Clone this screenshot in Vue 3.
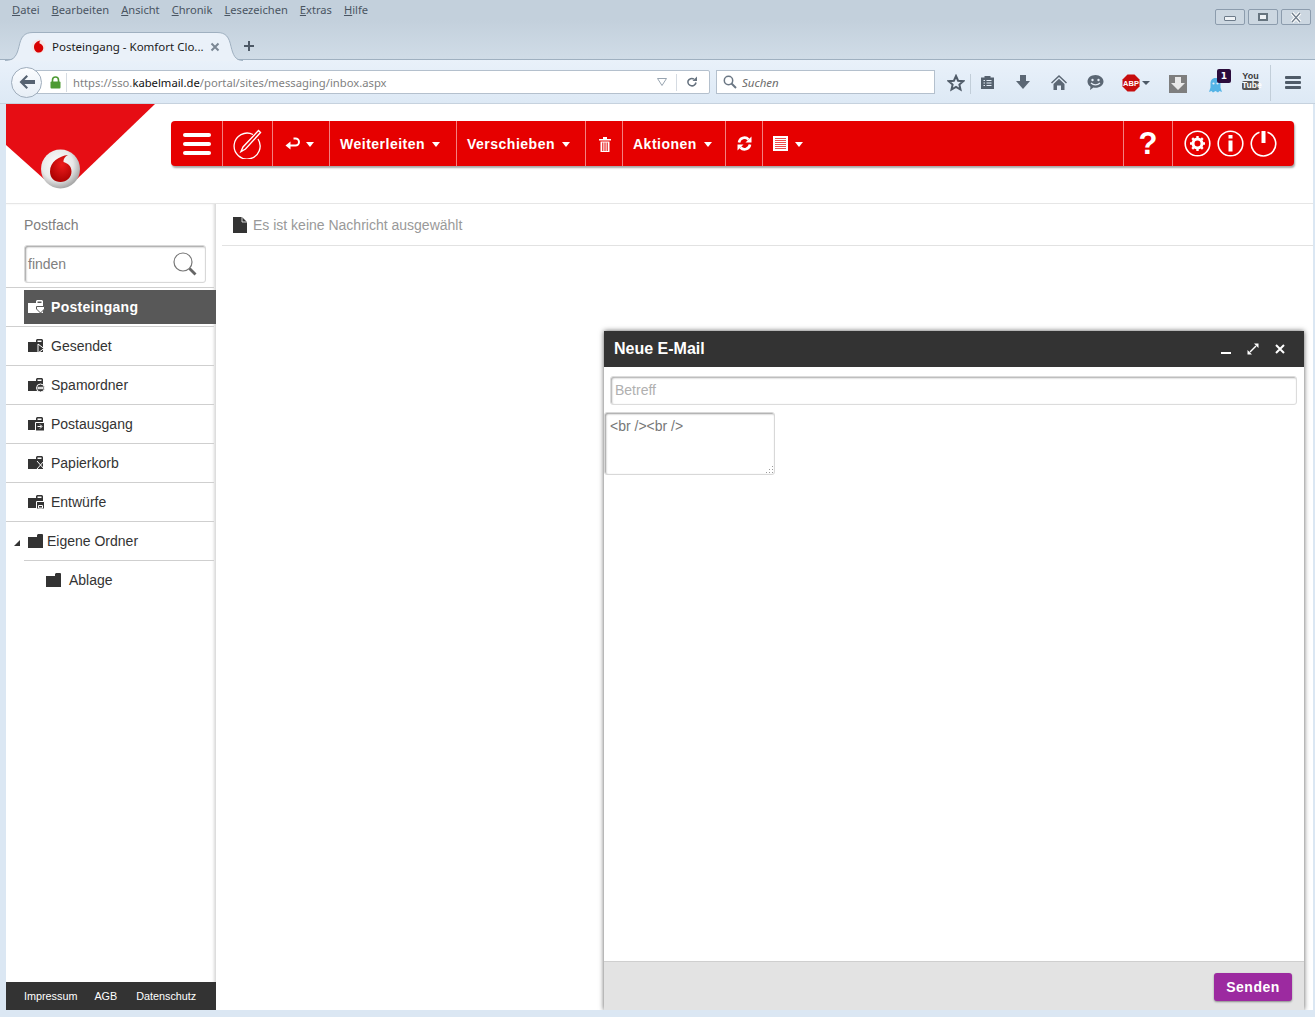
<template>
  <div class="browser">
    <div class="menubar">
      <span v-for="m in menus" :key="m.rest" class="menu-item"><u>{{ m.key }}</u>{{ m.rest }}</span>
      <div class="win-buttons">
        <div class="win-btn"><span class="win-min"></span></div>
        <div class="win-btn"><span class="win-max"></span></div>
        <div class="win-btn">
          <svg width="14" height="11" viewBox="0 0 14 11"><path d="M3 1l8 9M11 1l-8 9" fill="none" stroke="#fff" stroke-width="3.400"/><path d="M3 1l8 9M11 1l-8 9" fill="none" stroke="#6f7d8b" stroke-width="1.300"/></svg>
        </div>
      </div>
    </div>

    <div class="tabstrip">
      <div class="tab">
        <svg class="tab-shape" width="238" height="29" viewBox="0 0 238 29">
          <path d="M0 29c10 0 12-6 14-14.500C16 5 19 .5 28 .5h184c9 0 12 4.500 14 14 2 8 4 14.500 12 14.500z" fill="#eaf1f9"/>
          <path d="M0 28.500c10 0 12-6 14-14C16 5 19 .5 28 .5h184c9 0 12 4.500 14 14 2 8 4 14 12 14" fill="none" stroke="#9fb0c0"/>
        </svg>
        <svg class="tab-favicon" width="15" height="15" viewBox="0 0 15 15"><circle cx="7.500" cy="7.500" r="7" fill="#f3e6e6"/><path d="M9.500 1.500C6 2 3 4.500 3 8s2.300 5.500 4.800 5.500 4.500-2 4.500-4.500-2-4-3.700-4.500c-.3-1.200 0-2.500.9-3z" fill="#d80000"/></svg>
        <span class="tab-title">Posteingang - Komfort Clo...</span>
        <svg class="tab-close" width="10" height="10" viewBox="0 0 10 10"><path d="M1.500 1.500l7 7M8.500 1.500l-7 7" stroke="#7b8794" stroke-width="2"/></svg>
      </div>
      <svg class="new-tab" width="12" height="12" viewBox="0 0 12 12"><path d="M6 1v10M1 6h10" stroke="#4d5966" stroke-width="2"/></svg>
    </div>

    <div class="navbar">
      <div class="back-btn">
        <svg width="18" height="16" viewBox="0 0 18 16"><path d="M8.500 1L1.500 8l7 7 1.500-1.500L6.500 10H17V6H6.500L10 2.500z" fill="#566271"/></svg>
      </div>
      <div class="urlbar">
        <svg class="lock" width="11" height="13" viewBox="0 0 11 13"><path d="M2.500 6V4a3 3 0 016 0v2" fill="none" stroke="#4d9a33" stroke-width="1.600"/><rect x="0.500" y="5.500" width="10" height="7" rx="1" fill="#4d9a33"/></svg>
        <span class="url-text">https://sso.<b>kabelmail.de</b>/portal/sites/messaging/inbox.aspx</span>
        <svg class="url-drop" width="10" height="8" viewBox="0 0 10 8"><path d="M.5.500h9L5 7.500z" fill="none" stroke="#98a4b0"/></svg>
        <span class="url-sep"></span>
        <svg class="url-reload" width="12" height="12" viewBox="0 0 12 12"><path d="M10 6.500A4 4 0 112 5a4 4 0 016-1.800" fill="none" stroke="#66727f" stroke-width="1.600"/><path d="M11 .500V5H6.500z" fill="#66727f"/></svg>
      </div>
      <div class="searchbar">
        <svg width="14" height="14" viewBox="0 0 14 14"><circle cx="5.500" cy="5.500" r="4.200" fill="none" stroke="#6b7784" stroke-width="1.500"/><path d="M8.500 8.500l4.500 4.500" stroke="#6b7784" stroke-width="2"/></svg>
        <span>Suchen</span>
      </div>
      <div class="nav-icons">
        <svg class="ni ni-star" width="18" height="18" viewBox="0 0 18 18"><path d="M9 2l2.100 4.700 5.100.5-3.800 3.400 1.100 5L9 13l-4.500 2.600 1.100-5L1.800 7.200l5.100-.5z" fill="none" stroke="#4f5b68" stroke-width="2"/></svg>
        <span class="nav-sep"></span>
        <svg class="ni ni-list" width="15" height="16" viewBox="0 0 15 16"><path d="M1 3.500h3.500V2h6v1.500H14V15H1z" fill="#55616e"/><path d="M3.500 6.500h1.500M6.500 6.500h5M3.500 9h1.500M6.500 9h5M3.500 11.500h1.500M6.500 11.500h5" stroke="#e4edf7" stroke-width="1.200"/></svg>
        <svg class="ni ni-down" width="14" height="16" viewBox="0 0 14 16"><path d="M4 1h6v6h4l-7 8-7-8h4z" fill="#5b6774"/></svg>
        <svg class="ni ni-home" width="16" height="15" viewBox="0 0 16 15"><path d="M8 0L0 7.500l1 1L8 2l7 6.500 1-1z" fill="#5b6774"/><path d="M2.500 9L8 3.800 13.500 9v6H10v-4.500H6V15H2.500z" fill="#5b6774"/></svg>
        <svg class="ni ni-chat" width="17" height="17" viewBox="0 0 17 17"><path d="M8.500 1C4 1 .5 3.800.5 7.500c0 2.200 1.200 4 3 5.200L3 16l3.500-2.400c.6.100 1.300.2 2 .2 4.500 0 8-2.800 8-6.300S13 1 8.500 1z" fill="#5b6774"/><circle cx="5.500" cy="6" r="1.200" fill="#e4edf7"/><circle cx="11.500" cy="6" r="1.200" fill="#e4edf7"/><path d="M4 9c2.500 2.500 6.500 2.500 9 0" fill="none" stroke="#e4edf7" stroke-width="1.200"/></svg>
        <svg class="ni ni-abp" width="18" height="18" viewBox="0 0 18 18"><path d="M5.500 .5h7l5 5v7l-5 5h-7l-5-5v-7z" fill="#c70d0d"/><text x="9" y="12" text-anchor="middle" class="abp-text">ABP</text></svg>
        <span class="abp-caret"></span>
        <svg class="ni ni-dl" width="18" height="18" viewBox="0 0 18 18"><rect width="18" height="18" fill="#7e7e7e"/><path d="M6 2h6v6h4l-7 7-7-7h4z" fill="#e9e9e9"/></svg>
        <div class="ni ni-ghost">
          <svg width="13" height="15" viewBox="0 0 13 15"><path d="M6.500 0C3 0 1.500 2.500 1.500 5.500v4L0 14l2.500-1L4 14.500 6.500 13 9 14.500l1.500-1.500 2.500 1-1.500-4.500v-4C11.500 2.500 10 0 6.500 0z" fill="#55b4e6"/><circle cx="4.500" cy="5.500" r="1.100" fill="#e4edf7"/><circle cx="8.500" cy="5.500" r="1.100" fill="#e4edf7"/></svg>
          <span class="ghost-badge">1</span>
        </div>
        <div class="ni ni-yt"><span class="yt-you">You</span><span class="yt-tube">Tube</span></div>
        <span class="nav-sep nav-sep2"></span>
        <div class="ni ni-burger"><span></span><span></span><span></span></div>
      </div>
    </div>

    <div class="page">
      <svg class="logo" width="150" height="95" viewBox="0 0 150 95">
        <defs>
          <radialGradient id="ring" cx="42%" cy="38%" r="62%">
            <stop offset="0" stop-color="#ffffff"/><stop offset="0.65" stop-color="#e8e8e8"/><stop offset="1" stop-color="#a8a8a8"/>
          </radialGradient>
          <radialGradient id="drop" cx="55%" cy="35%" r="70%">
            <stop offset="0" stop-color="#ee1c1c"/><stop offset="1" stop-color="#a80000"/>
          </radialGradient>
        </defs>
        <path d="M0 0h149L71 75H38L0 41z" fill="#e60d14"/>
        <circle cx="54.500" cy="65" r="19.500" fill="url(#ring)"/>
        <path d="M62 51c-9 1-18 7-18 16.500 0 6.500 4.500 10.500 10.500 10.500s11-4.500 11-10.500c0-5.500-4-8.500-8-9.500-.4-2.800 1.500-5.500 4.500-7z" fill="url(#drop)"/>
      </svg>

      <header class="topbar">
        <div class="toolbar">
          <div class="tool t-burger"><div class="burger"><span></span><span></span><span></span></div></div>
          <div class="tool t-compose">
            <svg width="30" height="30" viewBox="0 0 30 30"><path d="M21 5.500A13 13 0 1026 10" fill="none" stroke="#fff" stroke-width="1.300"/><path d="M26.500 1.500l2 2L13.500 20l-4.500 2.500L11 18z" fill="none" stroke="#fff" stroke-width="1.400"/></svg>
          </div>
          <div class="tool t-reply">
            <svg width="15" height="14" viewBox="0 0 15 14"><path d="M8.500 1.500h2a3.500 3.500 0 010 7H4" fill="none" stroke="#fff" stroke-width="2"/><path d="M5.500 4.500L.5 8.500l5 4z" fill="#fff"/></svg>
            <i class="caret"></i>
          </div>
          <div class="tool t-fwd">Weiterleiten<i class="caret"></i></div>
          <div class="tool t-move">Verschieben<i class="caret"></i></div>
          <div class="tool t-trash">
            <svg width="12" height="16" viewBox="0 0 12 16"><path d="M0 3h12v1.500H0zM4 1h4v2H4z" fill="#fff"/><path d="M1.500 5.500h9V16h-9z" fill="#fff"/><path d="M3.800 6.500V15M6 6.500V15M8.200 6.500V15" stroke="#e60000" stroke-width="1"/></svg>
          </div>
          <div class="tool t-actions">Aktionen<i class="caret"></i></div>
          <div class="tool t-sync">
            <svg width="15" height="15" viewBox="0 0 15 15"><path d="M2 6.500A5.500 5.500 0 0111.500 3.500" fill="none" stroke="#fff" stroke-width="2.600"/><path d="M14.500 .5v6h-6z" fill="#fff"/><path d="M13 8.500A5.500 5.500 0 013.500 11.500" fill="none" stroke="#fff" stroke-width="2.600"/><path d="M.5 14.500v-6h6z" fill="#fff"/></svg>
          </div>
          <div class="tool t-view">
            <svg width="15" height="15" viewBox="0 0 15 15"><rect width="15" height="15" fill="#fff"/><path d="M2 2.500h11M2 4.500h11M2 6.500h11M2 8.500h11M2 10.500h11M2 12.500h11" stroke="#e60000" stroke-width="0.700"/></svg>
            <i class="caret"></i>
          </div>
          <div class="tool-gap"></div>
          <div class="tool t-help">?</div>
          <div class="t-round">
            <svg width="27" height="27" viewBox="0 0 27 27"><circle cx="13.500" cy="13.500" r="12.300" fill="none" stroke="#fff" stroke-width="1.600"/><circle cx="13.500" cy="13.500" r="4.500" fill="none" stroke="#fff" stroke-width="3"/><path d="M13.500 6v3M13.500 18v3M6 13.500h3M18 13.500h3M8.200 8.200l2 2M16.800 16.800l2 2M18.800 8.200l-2 2M10.200 16.800l-2 2" stroke="#fff" stroke-width="2.400"/></svg>
            <svg width="27" height="27" viewBox="0 0 27 27"><circle cx="13.500" cy="13.500" r="12.300" fill="none" stroke="#fff" stroke-width="1.600"/><rect x="11.500" y="5" width="4" height="3.500" fill="#fff"/><rect x="11.500" y="10.500" width="4" height="11" fill="#fff"/></svg>
            <svg width="27" height="27" viewBox="0 0 27 27"><path d="M9.500 2.200a12.200 12.200 0 108 0" fill="none" stroke="#fff" stroke-width="1.600"/><rect x="11.500" y="1" width="4" height="12" fill="#fff"/></svg>
          </div>
        </div>
      </header>

      <div class="content">
        <aside class="sidebar">
          <div class="side-title">Postfach</div>
          <div class="side-search">
            <span>finden</span>
            <svg width="26" height="26" viewBox="0 0 26 26"><circle cx="11" cy="11" r="9" fill="none" stroke="#777" stroke-width="1.200"/><path d="M17.500 17.500l6 6" stroke="#666" stroke-width="2.800"/></svg>
          </div>
          <ul class="folders">
            <li v-for="f in folders" :key="f.name" class="folder" :class="{ active: f.active }">
              <div class="folder-link">
                <svg width="18" height="16" viewBox="0 0 18 16">
                  <path :d="folderShape" fill="currentColor"/>
                  <path d="M9.500 2.500h4V4h-4z" class="folder-notch"/>
                  <path :d="f.mark" class="folder-mark"/>
                </svg>
                <span>{{ f.name }}</span>
              </div>
            </li>
            <li class="folder own">
              <i class="tree-arrow"></i>
              <svg width="15" height="14" viewBox="0 0 15 14"><path d="M0 3h9V1l1-1h4l1 .5V14H0z" fill="#333"/></svg>
              <span>Eigene Ordner</span>
            </li>
            <li class="folder sub">
              <svg width="15" height="14" viewBox="0 0 15 14"><path d="M0 3h9V1l1-1h4l1 .5V14H0z" fill="#333"/></svg>
              <span>Ablage</span>
            </li>
          </ul>
          <footer class="side-footer">
            <span>Impressum</span><span>AGB</span><span>Datenschutz</span>
          </footer>
        </aside>

        <main class="reader">
          <div class="reader-head">
            <svg width="14" height="16" viewBox="0 0 14 16"><path d="M0 0h9l5 5v11H0z" fill="#333"/><path d="M9 0v5h5" fill="none" stroke="#fff" stroke-width="0.800"/></svg>
            <span>Es ist keine Nachricht ausgewählt</span>
          </div>
        </main>
      </div>

      <section class="compose">
        <div class="compose-head">
          <span class="compose-title">Neue E-Mail</span>
          <div class="compose-icons">
            <svg width="12" height="12" viewBox="0 0 12 12"><rect x="1" y="9" width="10" height="2" fill="#fff"/></svg>
            <svg width="12" height="12" viewBox="0 0 12 12"><path d="M7 .5h4.500V5zM.5 7v4.500H5z" fill="#fff"/><path d="M3 9l6-6" stroke="#fff" stroke-width="1.400"/></svg>
            <svg width="12" height="12" viewBox="0 0 12 12"><path d="M2 2l8 8M10 2l-8 8" stroke="#fff" stroke-width="2"/></svg>
          </div>
        </div>
        <div class="compose-body">
          <input class="subject" placeholder="Betreff" />
          <div class="message-wrap">
            <textarea class="message" :value="bodyText"></textarea>
            <svg class="grip" width="8" height="8" viewBox="0 0 8 8"><path d="M6 0h1v1H6zM3 3h1v1H3zM6 3h1v1H6zM0 6h1v1H0zM3 6h1v1H3zM6 6h1v1H6z" fill="#999"/></svg>
          </div>
        </div>
        <div class="compose-foot">
          <button class="send">Senden</button>
        </div>
      </section>
    </div>
  </div>
</template>

<script setup>
const menus = [
  { key: 'D', rest: 'atei' },
  { key: 'B', rest: 'earbeiten' },
  { key: 'A', rest: 'nsicht' },
  { key: 'C', rest: 'hronik' },
  { key: 'L', rest: 'esezeichen' },
  { key: 'E', rest: 'xtras' },
  { key: 'H', rest: 'ilfe' }
]

const folderShape = 'M0 4h8V2l1-1h5l1 1v12H0z'

const folders = [
  { name: 'Posteingang', active: true, mark: 'M8.500 7.500h8v2.500l-4 4-4-4z' },
  { name: 'Gesendet', mark: 'M10 6l6 4.500-6 4.500z' },
  { name: 'Spamordner', mark: 'M8.500 11a4 4 0 108 0 4 4 0 00-8 0zM10 10.300h5v1.400h-5z' },
  { name: 'Postausgang', mark: 'M7.500 6.500h9V15h-9zM9.500 10.500h4M12 8.500l2 2-2 2' },
  { name: 'Papierkorb', mark: 'M9 6l7 8M16 6l-7 8' },
  { name: 'Entwürfe', mark: 'M8.500 7.500h8V15h-8zM10.500 11.500h4V14h-4z' }
]

const bodyText = '<br /><br />'
</script>

<style>
html, body {
  margin: 0;
  background: #dce8f4;
}
</style>

<style scoped>
.browser {
  width: 1315px;
  height: 1017px;
  overflow: hidden;
  background: #dbe7f3;
  font-family: "Liberation Sans", Arial, sans-serif;
}

/* window chrome */
.menubar {
  height: 20px;
  position: relative;
  z-index: 1;
  display: flex;
  align-items: center;
  padding: 0 0 2px 12px;
  box-sizing: border-box;
  gap: 12px;
  background: #c3d0dc;
  font-family: "Noto Sans", sans-serif;
  font-size: 11.150px;
  color: #4a5562;
}
.menu-item u {
  text-decoration: underline;
}
.win-buttons {
  position: absolute;
  top: 9px;
  right: 4px;
  display: flex;
  gap: 3px;
}
.win-btn {
  width: 30px;
  height: 16px;
  box-sizing: border-box;
  border: 1px solid #8c9cad;
  border-radius: 2px;
  background: #ccd7e1;
  display: flex;
  align-items: center;
  justify-content: center;
}
.win-min {
  width: 10px;
  height: 3px;
  margin-top: 3px;
  border: 1px solid #6d7b8a;
  border-radius: 1px;
  background: #eef2f6;
}
.win-max {
  width: 6px;
  height: 4px;
  border: 2px solid #66747f;
  background: #eef2f6;
}
.tabstrip {
  height: 40px;
  position: relative;
  background: linear-gradient(#c3d0dc, #d0dce7);
  border-bottom: 1px solid #9fb0c0;
  box-sizing: border-box;
  display: flex;
  align-items: flex-end;
}
.tab {
  position: relative;
  width: 238px;
  height: 28px;
  margin-bottom: -1px;
  margin-left: 5px;
  padding-top: 1px;
  box-sizing: border-box;
  display: flex;
  align-items: center;
  font-family: "Noto Sans", sans-serif;
  font-size: 11.500px;
  color: #1b1b1b;
}
.tab-shape {
  position: absolute;
  left: 0;
  top: 0;
}
.tab-favicon {
  position: relative;
  margin-left: 26px;
  flex: none;
}
.tab-title {
  position: relative;
  margin-left: 6px;
  width: 158px;
  white-space: nowrap;
}
.tab-close {
  position: relative;
  flex: none;
}
.new-tab {
  margin: 0 0 7px 0;
}
.navbar {
  height: 44px;
  display: flex;
  align-items: center;
  background: linear-gradient(#e9f1fa, #dde9f5);
  border-bottom: 1px solid #c6d2de;
  box-sizing: border-box;
  padding: 1px 0 0 11px;
}
.back-btn {
  width: 31px;
  height: 31px;
  box-sizing: border-box;
  margin-right: -15px;
  position: relative;
  z-index: 1;
  border: 1px solid #9fadbc;
  border-radius: 50%;
  background: linear-gradient(#fbfdff, #e7eef6);
  display: flex;
  align-items: center;
  justify-content: center;
}
.urlbar {
  width: 683px;
  height: 24px;
  box-sizing: border-box;
  display: flex;
  align-items: center;
  border: 1px solid #b4c0cd;
  border-radius: 0 2px 2px 0;
  background: #fff;
  padding-left: 22px;
  font-family: "Noto Sans", sans-serif;
  font-size: 11.250px;
  color: #7f7f7f;
}
.lock {
  flex: none;
}
.url-text {
  flex: 1;
  margin-left: 5px;
  padding: 1px 0 0 6px;
  border-left: 1px solid #d5dbe2;
  line-height: 18px;
}
.url-text b {
  font-weight: 400;
  color: #111;
}
.url-drop {
  margin-right: 9px;
}
.url-sep {
  width: 1px;
  height: 17px;
  background: #d5dbe2;
}
.url-reload {
  margin: 0 11px 0 9px;
}
.searchbar {
  width: 219px;
  height: 24px;
  box-sizing: border-box;
  margin-left: 6px;
  padding-left: 6px;
  display: flex;
  align-items: center;
  gap: 5px;
  border: 1px solid #b4c0cd;
  background: #fff;
  font-family: "Noto Sans", sans-serif;
  font-size: 11.500px;
  font-style: italic;
  color: #6d6d6d;
}
.nav-icons {
  position: relative;
  flex: 1;
  height: 40px;
}
.ni {
  position: absolute;
}
.ni-star { left: 12px; top: 12px; }
.ni-list { left: 45px; top: 12px; }
.ni-down { left: 81px; top: 12px; }
.ni-home { left: 116px; top: 13px; }
.ni-chat { left: 152px; top: 12px; }
.ni-abp { left: 187px; top: 12px; }
.ni-dl { left: 234px; top: 13px; }
.ni-ghost { left: 274px; top: 7px; width: 24px; height: 24px; }
.ni-ghost svg {
  position: absolute;
  left: 0;
  top: 9px;
}
.ni-yt { left: 307px; top: 10px; width: 17px; }
.ni-burger { left: 350px; top: 14px; width: 16px; }
.nav-sep {
  position: absolute;
  left: 35px;
  top: 12px;
  width: 1px;
  height: 20px;
  background: #c2ced9;
}
.nav-sep2 {
  left: 335px;
  top: 3px;
  height: 36px;
}
.abp-text {
  font-family: "Liberation Sans", sans-serif;
  font-size: 7.500px;
  font-weight: 700;
  fill: #fff;
}
.abp-caret {
  position: absolute;
  left: 207px;
  top: 19px;
  border-left: 4px solid transparent;
  border-right: 4px solid transparent;
  border-top: 4px solid #4d5966;
}
.ghost-badge {
  position: absolute;
  left: 8px;
  top: 0;
  width: 14px;
  height: 14px;
  border-radius: 2px;
  background: #2c0c3c;
  color: #fff;
  font-family: "DejaVu Sans", sans-serif;
  font-size: 9px;
  font-weight: 700;
  line-height: 14px;
  text-align: center;
}
.yt-you, .yt-tube {
  display: block;
  font-family: "Liberation Sans", sans-serif;
  font-size: 9px;
  font-weight: 700;
  line-height: 8px;
  text-align: center;
  color: #3b3b3b;
}
.yt-tube {
  margin-top: 1px;
  background: #555;
  color: #fff;
  border-radius: 2px;
  height: 9px;
  line-height: 9px;
  font-size: 8.500px;
}
.ni-burger span {
  display: block;
  height: 3px;
  margin-bottom: 2px;
  background: #4f5b68;
  border-radius: 1px;
}

/* page */
.page {
  position: relative;
  width: 1307px;
  height: 906px;
  margin-left: 6px;
  overflow: hidden;
  background: #fff;
  color: #333;
}
.logo {
  position: absolute;
  left: 0;
  top: 0;
}
.topbar {
  height: 100px;
  box-sizing: border-box;
  border-bottom: 1px solid #e6e6e6;
  padding: 17px 19px 0 165px;
}
.toolbar {
  height: 45px;
  display: flex;
  align-items: stretch;
  background: #e60000;
  border-radius: 4px;
  box-shadow: 1px 2px 2px rgba(0, 0, 0, 0.35);
  color: #fff;
  font-size: 14px;
  font-weight: 700;
  letter-spacing: 0.5px;
}
.tool {
  box-sizing: border-box;
  flex: none;
  display: flex;
  align-items: center;
  justify-content: flex-start;
  border-right: 1px solid rgba(255, 255, 255, 0.5);
  padding-left: 10px;
}
.tool-gap {
  flex: 1;
}
.t-burger { width: 52px; padding-left: 12px; }
.t-compose { width: 50px; padding-left: 9px; }
.t-reply { width: 57px; padding-left: 12px; }
.t-reply .caret { margin-left: 6px; }
.t-fwd { width: 127px; }
.t-move { width: 129px; }
.t-trash { width: 37px; padding-left: 13px; }
.t-actions { width: 103px; }
.t-sync { width: 37px; padding-left: 11px; }
.t-view { width: auto; border-right: 0; }
.t-help {
  width: 50px;
  border-left: 1px solid rgba(255, 255, 255, 0.5);
  justify-content: center;
  padding: 0;
  font-family: "Liberation Sans", sans-serif;
  font-size: 31px;
  font-weight: 700;
  letter-spacing: 0;
}
.t-round {
  flex: none;
  width: 121px;
  box-sizing: border-box;
  padding-left: 10.500px;
  display: flex;
  align-items: center;
  gap: 6px;
}
.burger {
  width: 28px;
}
.burger span {
  display: block;
  height: 4px;
  margin: 5px 0;
  background: #fff;
  border-radius: 2px;
}
.caret {
  margin-left: 7px;
  margin-top: 2px;
  border-left: 4.500px solid transparent;
  border-right: 4.500px solid transparent;
  border-top: 5px solid #fff;
}

/* sidebar and reader */
.content {
  display: flex;
  height: 806px;
}
.sidebar {
  position: relative;
  flex: none;
  width: 210px;
  box-sizing: border-box;
  padding-right: 2px;
  box-shadow: inset -3px 0 3px -1px #d8d8d8;
  display: flex;
  flex-direction: column;
}
.side-title {
  height: 41px;
  box-sizing: border-box;
  padding: 13px 0 0 18px;
  font-size: 14px;
  color: #808080;
}
.side-search {
  width: 182px;
  height: 38px;
  box-sizing: border-box;
  margin-left: 18px;
  padding: 0 7px 0 3px;
  display: flex;
  align-items: center;
  justify-content: space-between;
  border: 1px solid #d8d8d8;
  border-radius: 3px;
  box-shadow: inset 1px 1px 2px rgba(0, 0, 0, 0.4);
  font-size: 14px;
  color: #808080;
}
.folders {
  list-style: none;
  margin: 4px 0 0;
  padding: 0;
  border-top: 1px solid #cfcfcf;
}
.folder {
  height: 39px;
  box-sizing: border-box;
  display: flex;
  align-items: center;
  border-bottom: 1px solid #cfcfcf;
  font-size: 14px;
  color: #333;
}
.folder-link {
  flex: none;
  width: 192px;
  height: 34px;
  margin-left: 18px;
  padding-left: 4px;
  box-sizing: border-box;
  display: flex;
  align-items: center;
  gap: 5px;
}
.folder-link svg {
  flex: none;
}
.folder-notch {
  fill: #fff;
}
.folder-mark {
  fill: currentColor;
  stroke: #fff;
  stroke-width: 1;
}
.folder.active {
  position: relative;
}
.folder.active .folder-link {
  margin-right: -2px;
  background: #585858;
  color: #fff;
  font-weight: 700;
  letter-spacing: 0.3px;
}
.folder.active .folder-notch {
  fill: #585858;
}
.folder.active .folder-mark {
  stroke: #585858;
}
.own {
  position: relative;
  padding: 0 0 2px 22px;
  gap: 4px;
  border-bottom: 0;
}
.own::after {
  content: "";
  position: absolute;
  left: 18px;
  right: 0;
  bottom: 0;
  border-bottom: 1px solid #cfcfcf;
}
.tree-arrow {
  position: absolute;
  left: 8px;
  top: 18px;
  border-left: 6px solid transparent;
  border-bottom: 6px solid #333;
}
.sub {
  padding: 0 0 2px 40px;
  gap: 8px;
  border-bottom: 0;
}
.side-footer {
  margin-top: auto;
  margin-right: -2px;
  height: 28px;
  display: flex;
  align-items: center;
  padding-left: 18px;
  gap: 17px;
  background: #333;
  color: #fff;
  font-size: 10.800px;
}
.side-footer span:last-child {
  margin-left: 2px;
}
.reader {
  flex: 1;
  padding-left: 6px;
}
.reader-head {
  height: 42px;
  box-sizing: border-box;
  display: flex;
  align-items: center;
  gap: 6px;
  padding-left: 11px;
  border-bottom: 1px solid #e2e2e2;
  font-size: 14px;
  color: #999;
}

/* compose window */
.compose {
  position: absolute;
  left: 598px;
  top: 227px;
  width: 700px;
  height: 679px;
  display: flex;
  flex-direction: column;
  background: #fff;
  box-shadow: 0 0 5px rgba(0, 0, 0, 0.65);
}
.compose-head {
  height: 36px;
  flex: none;
  display: flex;
  align-items: center;
  justify-content: space-between;
  padding: 0 18px 0 10px;
  background: #333;
  color: #fff;
}
.compose-title {
  font-size: 16px;
  font-weight: 700;
}
.compose-icons {
  display: flex;
  gap: 15px;
}
.compose-body {
  flex: 1;
  display: flex;
  flex-direction: column;
  align-items: flex-start;
}
.subject {
  width: 687px;
  height: 29px;
  box-sizing: border-box;
  margin: 9px 0 0 6px;
  padding: 0 0 2px 4px;
  border: 1px solid #dcdcdc;
  border-radius: 3px;
  box-shadow: inset 1px 1px 2px rgba(0, 0, 0, 0.35);
  outline: 0;
  font-family: "Liberation Sans", Arial, sans-serif;
  font-size: 14px;
}
.subject::placeholder {
  color: #b0b0b0;
  opacity: 1;
}
.message-wrap {
  position: relative;
  margin: 7px 0 0;
  width: 171px;
  height: 63px;
}
.message {
  display: block;
  width: 100%;
  height: 100%;
  box-sizing: border-box;
  padding: 5px;
  border: 1px solid #d8d8d8;
  border-radius: 3px;
  box-shadow: inset 1px 1px 2px rgba(0, 0, 0, 0.4);
  outline: 0;
  resize: none;
  font-family: "Liberation Sans", Arial, sans-serif;
  font-size: 14px;
  color: #777;
}
.grip {
  position: absolute;
  right: 1px;
  bottom: 1px;
}
.compose-foot {
  height: 49px;
  flex: none;
  box-sizing: border-box;
  display: flex;
  justify-content: flex-end;
  align-items: flex-start;
  padding: 11px 12px 0 0;
  border-top: 1px solid #cfcfcf;
  background: #e3e3e3;
}
.send {
  width: 78px;
  height: 28px;
  border: 0;
  border-radius: 3px;
  background: #9c2aa0;
  box-shadow: 0 1px 2px rgba(0, 0, 0, 0.4);
  color: #fff;
  font-family: "Liberation Sans", Arial, sans-serif;
  font-size: 14px;
  font-weight: 700;
  letter-spacing: 0.5px;
}
</style>
